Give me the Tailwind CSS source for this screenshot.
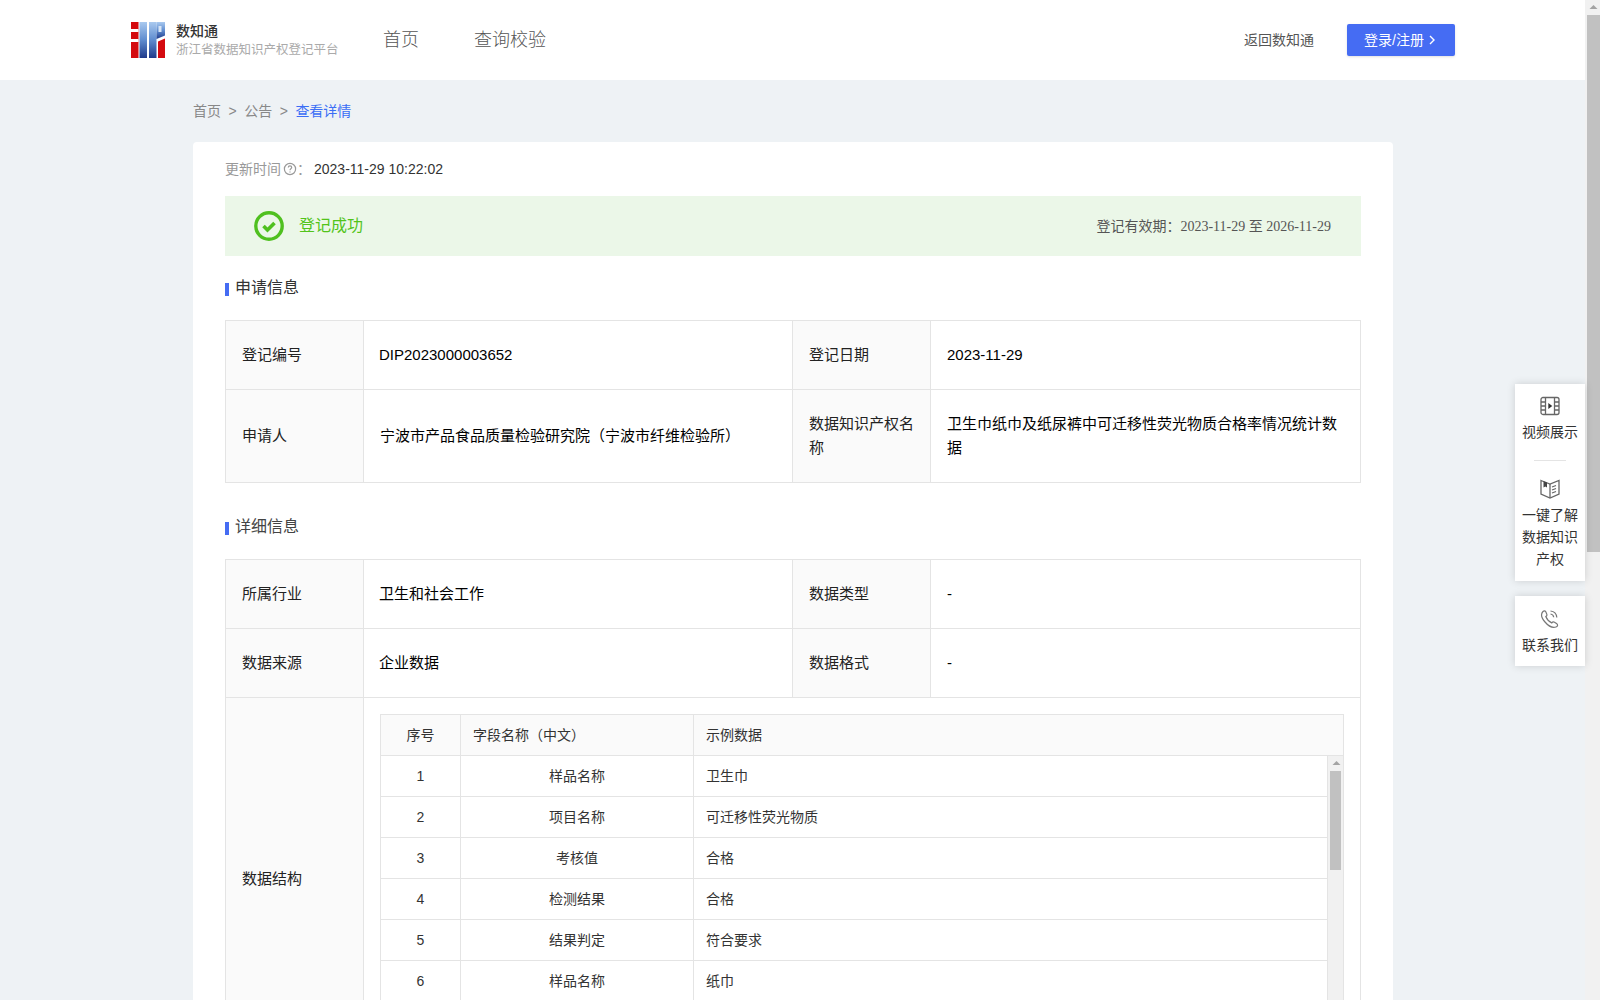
<!DOCTYPE html>
<html lang="zh-CN">
<head>
    <meta charset="UTF-8">
    <title>数知通 - 查看详情</title>
    <script src="https://cdn.jsdelivr.net/npm/@tailwindcss/browser@4"></script>
</head>
<body class="font-['Liberation_Sans','Noto_Sans_CJK_SC',sans-serif] text-[#333] bg-[#eef2f5]">
<div class="relative flex h-screen overflow-hidden">
    <!-- page -->
    <div class="w-[1585px] h-[1000px] overflow-hidden">
        <header class="flex items-center h-20 bg-white pl-[131px] pr-[130px]">
            <svg class="w-[34px] h-9" viewBox="0 0 34 36">
                <defs>
                    <linearGradient id="blue" x1="0" y1="0" x2="0" y2="1">
                        <stop offset="0" stop-color="#a9c9ef"/>
                        <stop offset="0.5" stop-color="#5f8ccf"/>
                        <stop offset="1" stop-color="#1f3a8a"/>
                    </linearGradient>
                </defs>
                <rect x="0" y="0" width="7.500" height="36" fill="#d40a0f"/>
                <rect x="0" y="7" width="7.500" height="3" fill="#fff"/>
                <rect x="0" y="17" width="7.500" height="3" fill="#fff"/>
                <rect x="8.500" y="0" width="7.500" height="36" fill="url(#blue)"/>
                <rect x="18" y="0" width="7.500" height="36" fill="url(#blue)"/>
                <path d="M25.500 0H34v13.500l-8.500 3.500z" fill="url(#blue)"/>
                <rect x="27.500" y="4" width="3" height="6" fill="#d7e5f6"/>
                <path d="M27 19.500l7-3V36h-7z" fill="#d40a0f"/>
            </svg>
            <div class="ml-[11px] w-[170px]">
                <div class="text-sm leading-5 font-medium text-[#333]">数知通</div>
                <div class="text-[12.500px] leading-[18px] text-[#aaa] whitespace-nowrap">浙江省数据知识产权登记平台</div>
            </div>
            <nav class="flex gap-[55px] ml-[37px] text-lg font-light text-[#555]">
                <a>首页</a>
                <a>查询校验</a>
            </nav>
            <a class="ml-auto text-sm text-[#555]">返回数知通</a>
            <button class="flex items-center justify-center gap-1 ml-[33px] pr-[2px] w-[108px] h-8 rounded-[2px] bg-[#456cf3] text-sm text-white shadow-sm">
                登录/注册
                <svg class="w-[8px] h-[10px]" viewBox="0 0 8 10" fill="none" stroke="#fff" stroke-width="1.4"><path d="M2 1l4 4-4 4"/></svg>
            </button>
        </header>

        <main class="w-[1200px] ml-[193px]">
            <div class="flex items-center h-[62px] text-sm text-[#888]">
                <span>首页</span>
                <span class="mx-[7.500px]">&gt;</span>
                <span>公告</span>
                <span class="mx-[7.500px]">&gt;</span>
                <span class="text-[#3b6ef5]">查看详情</span>
            </div>

            <div class="bg-white rounded-t px-8 pt-4">
                <div class="flex items-center h-[22px] text-sm">
                    <span class="text-[#999]">更新时间</span>
                    <svg class="w-[14px] h-[14px] ml-[2px]" viewBox="0 0 14 14" fill="none" stroke="#999" stroke-width="1.2">
                        <circle cx="7" cy="7" r="5.600"/>
                        <path d="M5.300 5.600c0-2.200 3.400-2.200 3.400 0 0 1.200-1.700 1.300-1.700 2.600"/>
                        <path d="M7 9.400v1.100"/>
                    </svg>
                    <span class="text-[#999]">：</span>
                    <span class="ml-[3px]">2023-11-29 10:22:02</span>
                </div>

                <div class="flex items-center justify-between h-[60px] mt-4 pl-[29px] pr-[30px] bg-[#ebf7e8]">
                    <div class="flex items-center gap-[15px]">
                        <svg class="w-[30px] h-[30px]" viewBox="0 0 30 30" fill="none" stroke="#4fc01f">
                            <circle cx="15" cy="15" r="13.200" stroke-width="3.400"/>
                            <path d="M9.500 15l4 4 7-7" stroke-width="3.600"/>
                        </svg>
                        <span class="text-base text-[#52c41a]">登记成功</span>
                    </div>
                    <div class="text-sm text-[#555]">登记有效期：<span class="font-['Liberation_Serif','Noto_Sans_CJK_SC',serif]">2023-11-29 至 2026-11-29</span></div>
                </div>

                <h2 class="flex items-center h-6 mt-5 text-base font-normal text-[#333]">
                    <span class="w-1 h-[13px] mt-[3px] mr-[6px] bg-[#456cf3]"></span>申请信息
                </h2>
                <table class="w-full table-fixed border-collapse mt-5 text-[15px] text-black border border-[#e4e4e4]">
                    <tr class="h-[69px]">
                        <td class="w-[138px] px-4 bg-[#fafafa] border border-[#e4e4e4] text-[#222]">登记编号</td>
                        <td class="w-[429px] pl-[15px] pr-4 border border-[#e4e4e4]">DIP2023000003652</td>
                        <td class="w-[138px] px-4 bg-[#fafafa] border border-[#e4e4e4] text-[#222]">登记日期</td>
                        <td class="px-4 border border-[#e4e4e4]">2023-11-29</td>
                    </tr>
                    <tr class="h-[93px]">
                        <td class="px-4 bg-[#fafafa] border border-[#e4e4e4] text-[#222]">申请人</td>
                        <td class="px-4 border border-[#e4e4e4]">宁波市产品食品质量检验研究院（宁波市纤维检验所）</td>
                        <td class="px-4 bg-[#fafafa] border border-[#e4e4e4] text-[#222] leading-6">数据知识产权名称</td>
                        <td class="px-4 border border-[#e4e4e4] leading-6">卫生巾纸巾及纸尿裤中可迁移性荧光物质合格率情况统计数据</td>
                    </tr>
                </table>

                <h2 class="flex items-center h-6 mt-8 text-base font-normal text-[#444]">
                    <span class="w-1 h-[13px] mt-[3px] mr-[6px] bg-[#456cf3]"></span>详细信息
                </h2>
                <table class="w-full table-fixed border-collapse mt-5 text-[15px] text-black border border-[#e4e4e4]">
                    <tr class="h-[69px]">
                        <td class="w-[138px] px-4 bg-[#fafafa] border border-[#e4e4e4] text-[#222]">所属行业</td>
                        <td class="w-[429px] pl-[15px] pr-4 border border-[#e4e4e4]">卫生和社会工作</td>
                        <td class="w-[138px] px-4 bg-[#fafafa] border border-[#e4e4e4] text-[#222]">数据类型</td>
                        <td class="px-4 border border-[#e4e4e4]">-</td>
                    </tr>
                    <tr class="h-[69px]">
                        <td class="px-4 bg-[#fafafa] border border-[#e4e4e4] text-[#222]">数据来源</td>
                        <td class="pl-[15px] pr-4 border border-[#e4e4e4]">企业数据</td>
                        <td class="px-4 bg-[#fafafa] border border-[#e4e4e4] text-[#222]">数据格式</td>
                        <td class="px-4 border border-[#e4e4e4]">-</td>
                    </tr>
                    <tr class="h-[362px]">
                        <td class="px-4 bg-[#fafafa] border border-[#e4e4e4] text-[#222]">数据结构</td>
                        <td colspan="3" class="p-4 align-top border border-[#e4e4e4]">
                            <div class="border border-[#e4e4e4] text-sm text-[#333]">
                                <div class="grid grid-cols-[80px_233px_1fr] h-[41px] items-center bg-[#fafafa] border-b border-[#e4e4e4]">
                                    <div class="flex items-center justify-center h-full border-r border-[#e4e4e4]">序号</div>
                                    <div class="flex items-center h-full px-3 border-r border-[#e4e4e4]">字段名称（中文）</div>
                                    <div class="px-3">示例数据</div>
                                </div>
                                <div class="flex h-[288px]">
                                    <div class="flex-1 border-r border-[#e4e4e4]">
                                        <div class="grid grid-cols-[80px_233px_1fr] h-[41px] items-center border-b border-[#e4e4e4]">
                                            <div class="flex items-center justify-center h-full border-r border-[#e4e4e4]">1</div>
                                            <div class="flex items-center justify-center h-full border-r border-[#e4e4e4]">样品名称</div>
                                            <div class="px-3">卫生巾</div>
                                        </div>
                                        <div class="grid grid-cols-[80px_233px_1fr] h-[41px] items-center border-b border-[#e4e4e4]">
                                            <div class="flex items-center justify-center h-full border-r border-[#e4e4e4]">2</div>
                                            <div class="flex items-center justify-center h-full border-r border-[#e4e4e4]">项目名称</div>
                                            <div class="px-3">可迁移性荧光物质</div>
                                        </div>
                                        <div class="grid grid-cols-[80px_233px_1fr] h-[41px] items-center border-b border-[#e4e4e4]">
                                            <div class="flex items-center justify-center h-full border-r border-[#e4e4e4]">3</div>
                                            <div class="flex items-center justify-center h-full border-r border-[#e4e4e4]">考核值</div>
                                            <div class="px-3">合格</div>
                                        </div>
                                        <div class="grid grid-cols-[80px_233px_1fr] h-[41px] items-center border-b border-[#e4e4e4]">
                                            <div class="flex items-center justify-center h-full border-r border-[#e4e4e4]">4</div>
                                            <div class="flex items-center justify-center h-full border-r border-[#e4e4e4]">检测结果</div>
                                            <div class="px-3">合格</div>
                                        </div>
                                        <div class="grid grid-cols-[80px_233px_1fr] h-[41px] items-center border-b border-[#e4e4e4]">
                                            <div class="flex items-center justify-center h-full border-r border-[#e4e4e4]">5</div>
                                            <div class="flex items-center justify-center h-full border-r border-[#e4e4e4]">结果判定</div>
                                            <div class="px-3">符合要求</div>
                                        </div>
                                        <div class="grid grid-cols-[80px_233px_1fr] h-[41px] items-center border-b border-[#e4e4e4]">
                                            <div class="flex items-center justify-center h-full border-r border-[#e4e4e4]">6</div>
                                            <div class="flex items-center justify-center h-full border-r border-[#e4e4e4]">样品名称</div>
                                            <div class="px-3">纸巾</div>
                                        </div>
                                    </div>
                                    <!-- inner scrollbar -->
                                    <div class="w-[15px] bg-[#f1f1f1] pl-[2px]">
                                        <svg class="w-[13px] h-[15px]" viewBox="0 0 13 15"><path d="M6.500 5l4 4h-8z" fill="#a3a3a3"/></svg>
                                        <div class="w-[11px] h-[99px] bg-[#c1c1c1]"></div>
                                    </div>
                                </div>
                            </div>
                        </td>
                    </tr>
                </table>
            </div>
        </main>
    </div>

    <!-- page scrollbar -->
    <div class="w-[15px] h-[1000px] bg-[#f1f1f1] pl-[2px]">
        <svg class="w-[13px] h-[15px]" viewBox="0 0 13 15"><path d="M6.500 5l4 4h-8z" fill="#a3a3a3"/></svg>
        <div class="w-[13px] h-[537px] bg-[#c1c1c1]"></div>
    </div>

    <!-- floating side panel -->
    <div class="absolute left-[1515px] top-[384px] w-[70px] pr-px text-sm text-[#333] text-center">
        <div class="h-[197px] w-[70px] bg-white shadow-[0_0_8px_rgba(0,0,0,0.15)] pt-[12px]">
            <svg class="w-5 h-5 mx-auto" viewBox="0 0 20 20" fill="none" stroke="#666" stroke-width="1.300">
                <rect x="1" y="1.500" width="18" height="17" rx="2"/>
                <path d="M5.500 1.500v17M14.500 1.500v17M1 6h4.500M1 10h4.500M1 14h4.500M14.500 6H19M14.500 10H19M14.500 14H19"/>
                <path d="M8.300 7l4 3-4 3z" fill="#333" stroke="none"/>
            </svg>
            <div class="mt-[5px] leading-[22px] whitespace-nowrap">视频展示</div>
            <div class="w-8 h-px mx-auto mt-[17px] mb-[18px] bg-[#e4e4e4]"></div>
            <svg class="w-5 h-5 mx-auto" viewBox="0 0 20 20" fill="none" stroke="#666" stroke-width="1.300">
                <path d="M1 1.500L10 5l9-3.500V15l-9 4-9-4z"/>
                <path d="M10 5v14"/>
                <path d="M3.500 2.300l3.500 1.300v5l-1.700-1-1.800 1z" fill="#444" stroke="none"/>
                <path d="M12 8l4-1.500M12 11l4-1.500M12 14l4-1.500"/>
            </svg>
            <div class="mt-[5px] leading-[22px]">一键了解<br>数据知识<br>产权</div>
        </div>
        <div class="h-[70px] w-[70px] mt-[15px] bg-white shadow-[0_0_8px_rgba(0,0,0,0.15)] pt-[13px]">
            <svg class="w-5 h-5 mx-auto" viewBox="0 0 20 20" fill="none" stroke="#777" stroke-width="1.200">
                <path d="M3 2.500c-2 2-1.800 6 2 10.500s8 6 11 5c2-.7 2-2.500.5-3.500l-2-1.300c-1-.6-2-.3-2.700.7-3-1.400-5-3.700-6-6.400 1-.6 1.400-1.500.9-2.600L5.800 2.800C5 1.500 4 1.500 3 2.500z"/>
                <path d="M10.500 2c3.500.3 6 3 6.300 6.500M10.500 5c1.700.2 3 1.500 3.200 3.300"/>
            </svg>
            <div class="mt-[5px] leading-[22px] whitespace-nowrap">联系我们</div>
        </div>
    </div>
</div>
</body>
</html>
